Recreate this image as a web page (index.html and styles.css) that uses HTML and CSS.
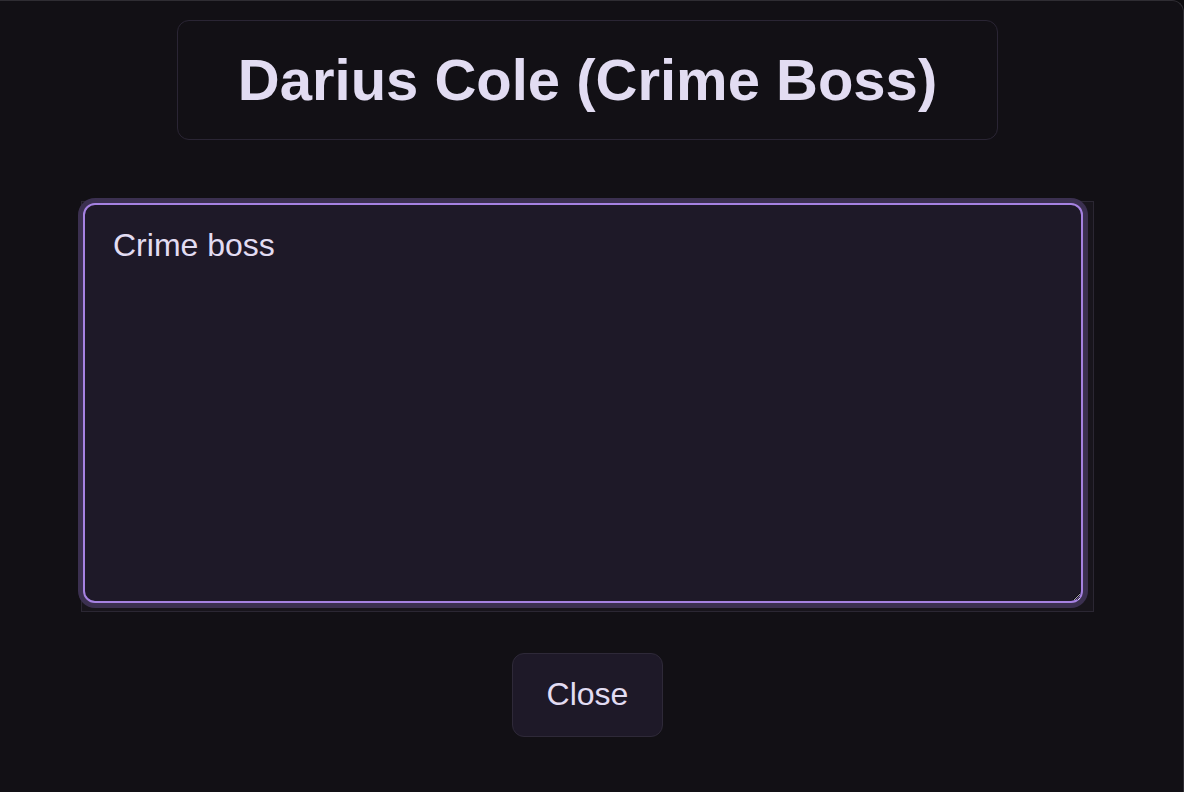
FILE: index.html
```html
<!DOCTYPE html>
<html lang="en">

<head>
  <meta charset="UTF-8">
  <title>Character Notes</title>
  <link rel="stylesheet" href="styles.css">
</head>

<body>
  <div class="modal">
    <div class="modal-inner">
      <h1 class="char-title">Darius Cole (Crime Boss)</h1>

      <div class="notes-wrap">
        <textarea class="notes" spellcheck="true">Crime boss</textarea>
      </div>

      <button class="close-btn" type="button">Close</button>
    </div>
  </div>
</body>

</html>
```

FILE: styles.css
```css
html,
body {
  margin: 0;
  height: 100%;
  background-color: #0d0c0f;
}

body {
  font-family: "Liberation Sans", Arial, sans-serif;
  color: #e2dcf2;
  overflow: hidden;
}

.modal {
  box-sizing: border-box;
  height: 100%;
  margin-left: -8px;
  background-color: #121015;
  border-top: 1px solid #2f2d33;
  border-right: 1px solid #2f2d33;
  border-top-right-radius: 12px;
}

.modal-inner {
  display: flex;
  flex-direction: column;
  align-items: center;
  padding-top: 19px;
}

.char-title {
  margin: 0;
  padding: 25px 60px 26px;
  font-size: 58px;
  font-weight: bold;
  line-height: 67px;
  color: #e2dcf2;
  border: 1px solid #2a2534;
  border-radius: 12px;
}

.notes-wrap {
  margin-top: 61px;
  padding: 1px 10px 8px 1px;
  background-color: #18151c;
  border: 1px solid #2b2733;
  line-height: 0;
}

.notes {
  box-sizing: border-box;
  width: 1000px;
  height: 400px;
  padding: 22px 28px;
  font-family: "Liberation Sans", Arial, sans-serif;
  font-size: 32px;
  line-height: 37px;
  color: #e2dcf2;
  background-color: #1e1928;
  border: 2px solid #a682e2;
  border-radius: 12px;
  box-shadow: 0 0 0 5px #3b3050;
  outline: none;
}

.close-btn {
  margin-top: 41px;
  padding: 22px 34px 23px;
  font-family: "Liberation Sans", Arial, sans-serif;
  font-size: 32px;
  line-height: 37px;
  color: #e2dcf2;
  background-color: #1e1928;
  border: 1px solid #2e2938;
  border-radius: 12px;
  cursor: pointer;
}
```
